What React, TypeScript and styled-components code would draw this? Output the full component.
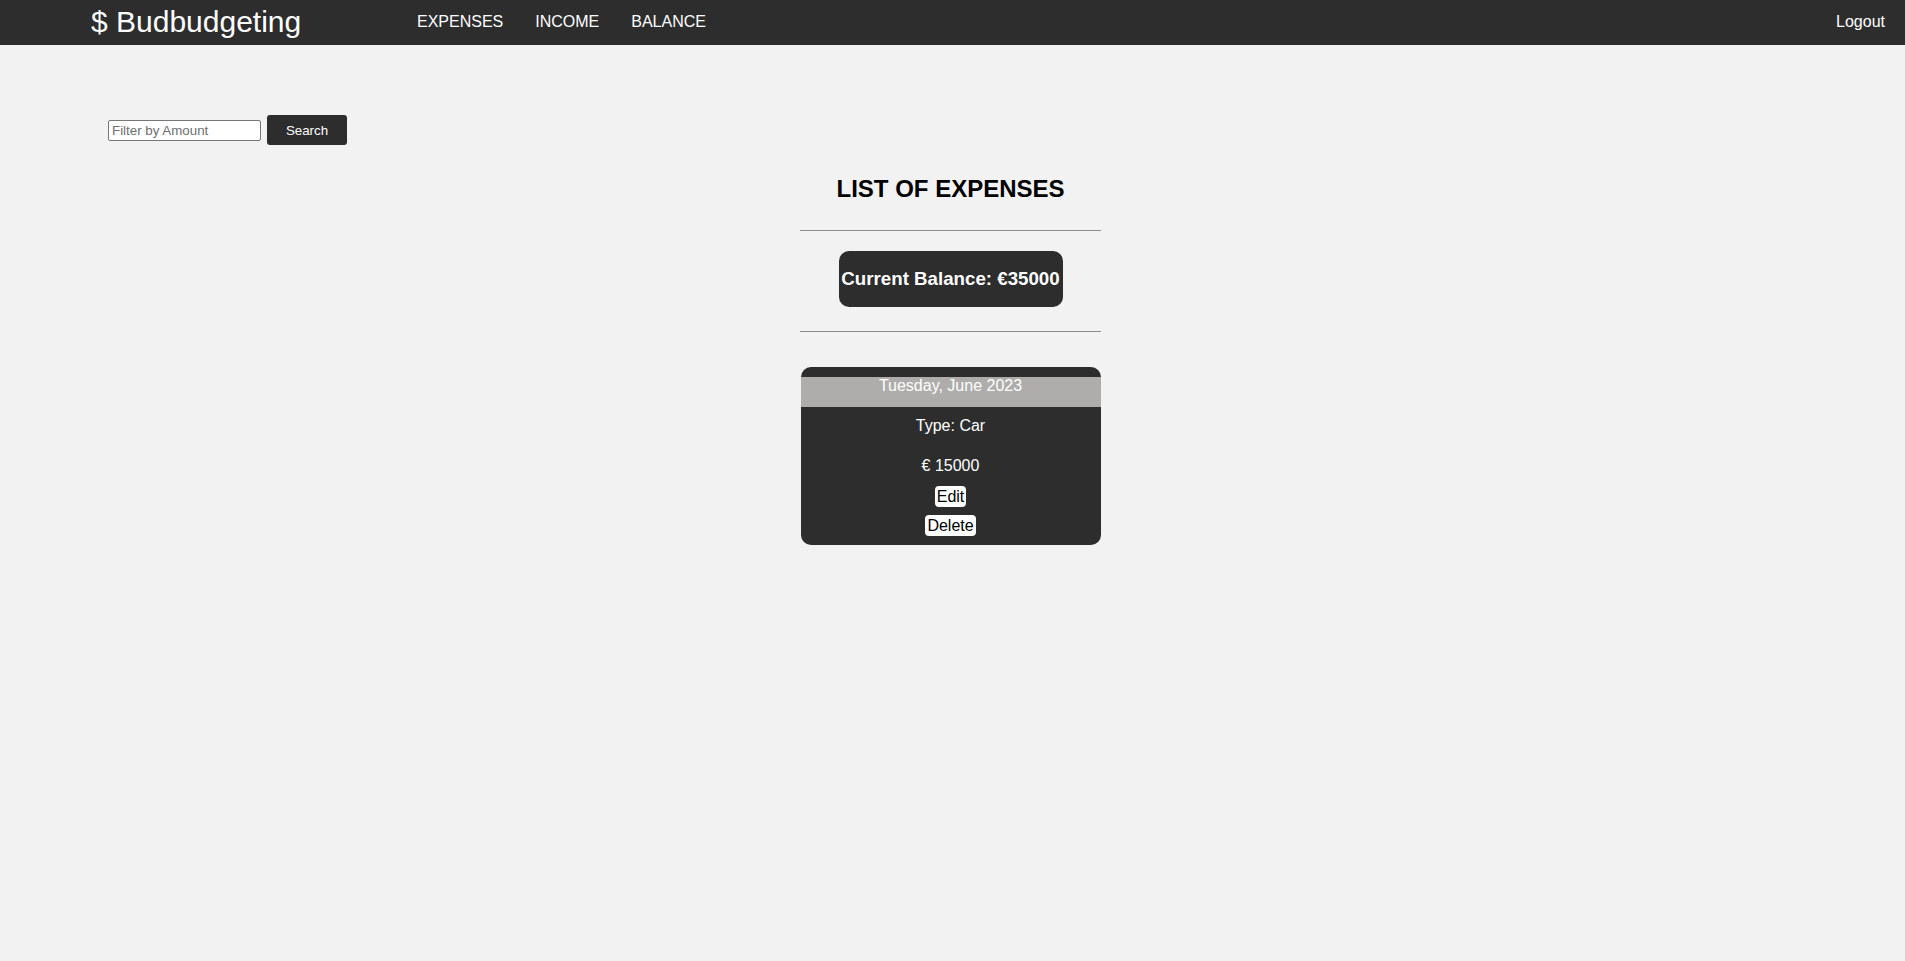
import styled, { createGlobalStyle } from "styled-components";

const GlobalStyle = createGlobalStyle`
    body {
        margin: 0;
        background-color: #f2f2f2;
        font-family: "Liberation Sans", Arial, sans-serif;
    }
`;

const Page = styled.div`
    min-height: 100vh;
    background-color: #f2f2f2;
`;

const Nav = styled.nav`
    box-sizing: border-box;
    height: 45px;
    background-color: #2d2d2d;
    display: flex;
    align-items: center;
    padding: 0 20px 2px 91px;
    color: white;
`;

const Logo = styled.div`
    font-size: 30px;
    line-height: 34px;
    width: 326px;
`;

const NavLinks = styled.ul`
    display: flex;
    gap: 32px;
    list-style: none;
    margin: 0;
    padding: 0;
`;

const NavLink = styled.li`
    font-size: 16px;
    color: white;
    cursor: pointer;
`;

const Logout = styled.div`
    margin-left: auto;
    font-size: 16px;
    cursor: pointer;
`;

const FilterRow = styled.form`
    display: flex;
    align-items: center;
    gap: 6px;
    margin: 70px 0 0 108px;
`;

const FilterInput = styled.input`
    box-sizing: border-box;
    width: 153px;
    height: 21px;
    font-family: "Liberation Sans", Arial, sans-serif;
    font-size: 13.33px;
    padding: 1px 3px;
    border: 1px solid #767676;
    border-radius: 2px;
    background: white;
    &::placeholder {
        color: #6f6f6f;
    }
`;

const SearchBtn = styled.button`
    width: 80px;
    height: 30px;
    background-color: #2d2d2d;
    color: white;
    border: none;
    border-radius: 3px;
    font-family: "Liberation Sans", Arial, sans-serif;
    font-size: 13.33px;
    cursor: pointer;
`;

const Column = styled.section`
    display: flex;
    flex-direction: column;
    align-items: center;
    padding-right: 4px;
`;

const Title = styled.h2`
    margin: 30px 0 0;
    font-size: 24px;
    line-height: 28px;
    font-weight: bold;
    color: black;
`;

const Divider = styled.hr<{ $top: number }>`
    width: 301px;
    margin: ${props => props.$top}px 0 0;
    border: none;
    border-top: 1px solid #8c8c8c;
    height: 0;
`;

const BalanceBox = styled.div`
    margin-top: 20px;
    box-sizing: border-box;
    width: 224px;
    height: 56px;
    background-color: #2d2d2d;
    color: white;
    border-radius: 10px;
    display: flex;
    align-items: center;
    justify-content: center;
    h3 {
        margin: 0;
        font-size: 18.72px;
        line-height: 22px;
        white-space: nowrap;
    }
`;

const ExpenseCard = styled.div`
    margin-top: 35px;
    width: 300px;
    background-color: #2d2d2d;
    color: white;
    border-radius: 10px;
    padding: 10px 0 9px;
    display: flex;
    flex-direction: column;
    align-items: center;
    font-size: 16px;
`;

const DateBand = styled.div`
    align-self: stretch;
    height: 30px;
    line-height: 18px;
    background-color: #afadab;
    text-align: center;
`;

const CardLine = styled.p<{ $top: number }>`
    margin: ${props => props.$top}px 0 0;
    line-height: 18px;
`;

const CardBtn = styled.button<{ $top: number }>`
    margin-top: ${props => props.$top}px;
    padding: 1px 2px;
    border: none;
    border-radius: 4px;
    background: white;
    color: black;
    font-family: "Liberation Sans", Arial, sans-serif;
    font-size: 16px;
    line-height: 19px;
    cursor: pointer;
`;

interface IExpense {
    id: number;
    date: string;
    type: string;
    amount: number;
}

const expenses: IExpense[] = [
    { id: 1, date: "Tuesday, June 2023", type: "Car", amount: 15000 },
];

function App() {
    return (
        <Page>
            <GlobalStyle />
            <Nav>
                <Logo>$ Budbudgeting</Logo>
                <NavLinks>
                    <NavLink>EXPENSES</NavLink>
                    <NavLink>INCOME</NavLink>
                    <NavLink>BALANCE</NavLink>
                </NavLinks>
                <Logout>Logout</Logout>
            </Nav>
            <FilterRow onSubmit={e => e.preventDefault()}>
                <FilterInput type="text" placeholder="Filter by Amount" />
                <SearchBtn type="submit">Search</SearchBtn>
            </FilterRow>
            <Column>
                <Title>LIST OF EXPENSES</Title>
                <Divider $top={27} />
                <BalanceBox>
                    <h3>Current Balance: €35000</h3>
                </BalanceBox>
                <Divider $top={24} />
                {expenses.map(expense => (
                    <ExpenseCard key={expense.id}>
                        <DateBand>{expense.date}</DateBand>
                        <CardLine $top={10}>Type: {expense.type}</CardLine>
                        <CardLine $top={22}>€ {expense.amount}</CardLine>
                        <CardBtn $top={11}>Edit</CardBtn>
                        <CardBtn $top={8}>Delete</CardBtn>
                    </ExpenseCard>
                ))}
            </Column>
        </Page>
    );
}

export default App;
